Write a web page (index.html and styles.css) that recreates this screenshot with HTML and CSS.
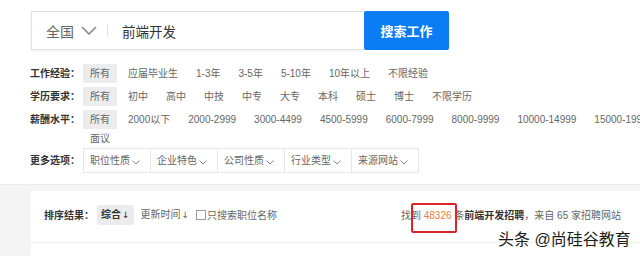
FILE: index.html
```html
<!DOCTYPE html>
<html lang="zh">
<head>
<meta charset="utf-8">
<link rel="stylesheet" href="styles.css">
</head>
<body>
<div class="top">
  <div class="search">
    <div class="box">
      <span class="city">全国</span>
      <svg class="chev" width="16" height="9" viewBox="0 0 16 9"><polyline points="1,1 8,8 15,1" fill="none" stroke="#888" stroke-width="1.6"/></svg>
      <span class="sep"></span>
      <span class="kw">前端开发</span>
    </div>
    <div class="btn">搜索工作</div>
  </div>
</div>

<div class="filters">
  <div class="row">
    <div class="label">工作经验：</div>
    <div class="opts">
      <span class="opt on">所有</span><span class="opt">应届毕业生</span><span class="opt">1-3年</span><span class="opt">3-5年</span><span class="opt">5-10年</span><span class="opt">10年以上</span><span class="opt">不限经验</span>
    </div>
  </div>
  <div class="row">
    <div class="label">学历要求：</div>
    <div class="opts">
      <span class="opt on">所有</span><span class="opt">初中</span><span class="opt">高中</span><span class="opt">中技</span><span class="opt">中专</span><span class="opt">大专</span><span class="opt">本科</span><span class="opt">硕士</span><span class="opt">博士</span><span class="opt">不限学历</span>
    </div>
  </div>
  <div class="row tight">
    <div class="label">薪酬水平：</div>
    <div class="opts">
      <span class="opt on">所有</span><span class="opt">2000以下</span><span class="opt">2000-2999</span><span class="opt">3000-4499</span><span class="opt">4500-5999</span><span class="opt">6000-7999</span><span class="opt">8000-9999</span><span class="opt">10000-14999</span><span class="opt">15000-19999</span><span class="opt">面议</span>
    </div>
  </div>
  <div class="row">
    <div class="label drop-label">更多选项：</div>
    <div class="drops">
      <span class="drop">职位性质<svg class="dchev" width="8" height="5" viewBox="0 0 8 5"><polyline points="0.5,0.5 4,4 7.5,0.5" fill="none" stroke="#888" stroke-width="1"/></svg></span>
      <span class="drop">企业特色<svg class="dchev" width="8" height="5" viewBox="0 0 8 5"><polyline points="0.5,0.5 4,4 7.5,0.5" fill="none" stroke="#888" stroke-width="1"/></svg></span>
      <span class="drop">公司性质<svg class="dchev" width="8" height="5" viewBox="0 0 8 5"><polyline points="0.5,0.5 4,4 7.5,0.5" fill="none" stroke="#888" stroke-width="1"/></svg></span>
      <span class="drop">行业类型<svg class="dchev" width="8" height="5" viewBox="0 0 8 5"><polyline points="0.5,0.5 4,4 7.5,0.5" fill="none" stroke="#888" stroke-width="1"/></svg></span>
      <span class="drop">来源网站<svg class="dchev" width="8" height="5" viewBox="0 0 8 5"><polyline points="0.5,0.5 4,4 7.5,0.5" fill="none" stroke="#888" stroke-width="1"/></svg></span>
    </div>
  </div>
</div>

<div class="results">
  <div class="card">
    <div class="sortbar">
      <div class="sort-left">
        <span class="slabel">排序结果：</span>
        <span class="sort on">综合<span class="arr">↓</span></span>
        <span class="sort">更新时间<span class="arr">↓</span></span>
        <span class="check"><span class="cb"></span>只搜索职位名称</span>
      </div>
      <div class="sort-right">找到 <span class="hl">48326</span> 条<b>前端开发招聘</b>，来自 65 家招聘网站</div>
    </div>
  </div>
</div>

<div class="mark">头条 @尚硅谷教育</div>
</body>
</html>
```

FILE: styles.css
```css
html, body {
  margin: 0;
  padding: 0;
  overflow: hidden;
  background: #fff;
}
body {
  font-family: "Liberation Sans", "Noto Sans CJK SC", sans-serif;
  font-size: 10px;
  color: #666;
  width: 640px;
  height: 257px;
  position: relative;
}
.top {
  padding: 11px 0 0 31px;
}
.search {
  display: flex;
  height: 39px;
}
.box {
  width: 333px;
  box-sizing: border-box;
  border: 1px solid #e2e2e2;
  border-right: none;
  box-shadow: 0 1px 3px rgba(0,0,0,0.06);
  display: flex;
  align-items: center;
  padding-left: 14px;
}
.city {
  font-size: 14px;
  color: #666;
}
.chev {
  margin-left: 7px;
}
.sep {
  width: 1px;
  height: 13px;
  background: #e3e3e3;
  margin: 0 14px 0 10px;
}
.kw {
  font-size: 13.5px;
  color: #333;
}
.btn {
  width: 85px;
  background: #0b7df4;
  color: #fff;
  font-weight: bold;
  font-size: 13px;
  display: flex;
  align-items: center;
  justify-content: center;
  border-radius: 2px;
}
.filters {
  width: 650px;
  padding-left: 30px;
  margin-top: 14px;
  margin-bottom: 11px;
}
.row {
  display: flex;
  margin-bottom: 4px;
  line-height: 19px;
}
.row.tight,
.row:last-child {
  margin-bottom: 0;
}
.label {
  width: 53px;
  flex: none;
  font-weight: bold;
  color: #333;
}
.opts {
  display: flex;
  flex-wrap: wrap;
  flex: 1;
  min-width: 0;
}
.opt {
  padding: 0 7px;
  margin-right: 4px;
  white-space: nowrap;
}
.opt.on {
  background: #ececec;
}
.drop-label {
  line-height: 25px;
}
.drops {
  display: flex;
}
.drop {
  height: 25px;
  box-sizing: border-box;
  border: 1px solid #e6e6e6;
  margin-left: -1px;
  padding: 0 10px 0 6px;
  display: flex;
  align-items: center;
  white-space: nowrap;
}
.drop:first-child {
  margin-left: 0;
}
.dchev {
  margin-left: 2px;
  margin-top: 3px;
}
.results {
  background: #f4f4f4;
  border-top: 1px solid #ebebeb;
  padding: 6px 0 0 31px;
  height: 72px;
  box-sizing: border-box;
}
.card {
  background: #fff;
  height: 100%;
}
.sortbar {
  display: flex;
  justify-content: space-between;
  align-items: center;
  height: 52px;
  box-sizing: border-box;
  padding: 14px 19px 18px 13px;
  border-bottom: 1px solid #efefef;
}
.sort-left {
  display: flex;
  align-items: center;
}
.slabel {
  font-weight: bold;
  color: #333;
  margin-right: 3px;
}
.sort {
  padding: 0 4px;
  line-height: 20px;
  margin-right: 1px;
}
.sort.on {
  background: #ececec;
  color: #333;
  font-weight: bold;
  border-radius: 2px;
  margin-right: 3px;
}
.arr {
  font-weight: normal;
  font-family: "DejaVu Sans", sans-serif;
  font-size: 9px;
  margin-left: 1px;
}
.check {
  display: flex;
  align-items: center;
  margin-left: 2px;
}
.cb {
  width: 8px;
  height: 8px;
  border: 1px solid #999;
  margin-right: 1px;
}
.sort-right {
  color: #666;
  white-space: nowrap;
}
.sort-right b {
  color: #333;
}
.hl {
  color: #ee7c3c;
  position: relative;
}
.hl::after {
  content: "";
  position: absolute;
  left: -13px;
  right: -5px;
  top: -7px;
  bottom: -12px;
  border: 2px solid #d9262b;
  border-radius: 2px;
}
.mark {
  position: absolute;
  left: 498px;
  top: 229px;
  font-size: 16px;
  line-height: 22px;
  color: #1c1c1c;
  white-space: nowrap;
  text-shadow: 0 0 2px #fff, 0 0 2px #fff;
}
```
